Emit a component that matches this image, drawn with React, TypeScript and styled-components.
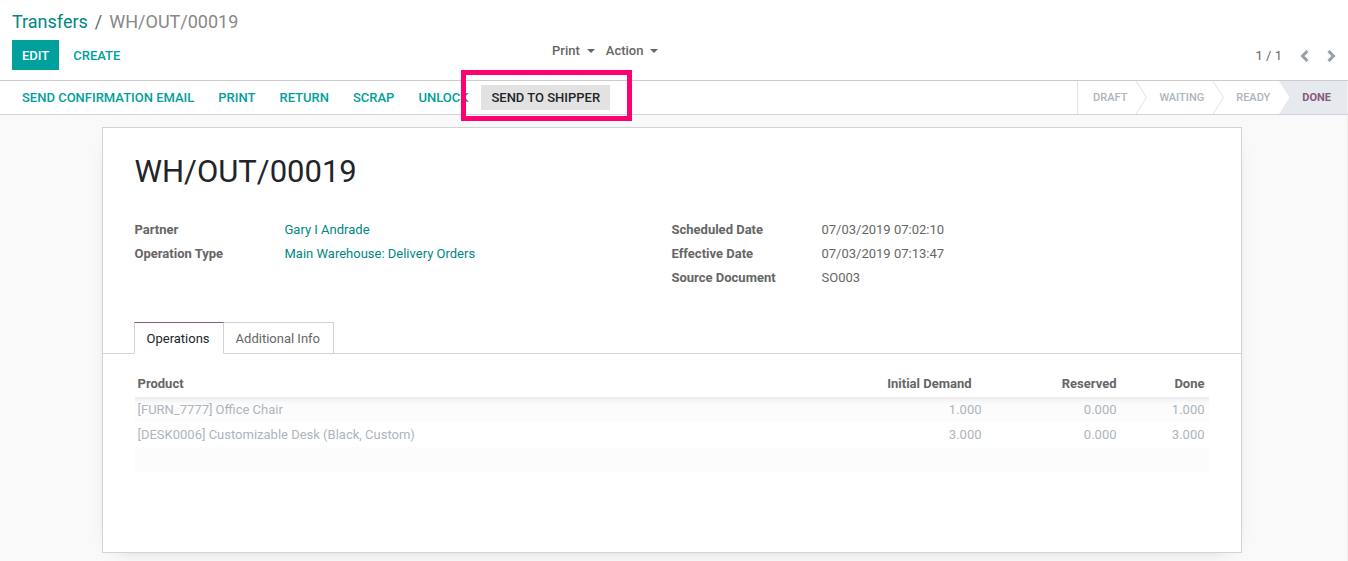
import React from "react";
import styled, { createGlobalStyle, css } from "styled-components";

const GlobalStyle = createGlobalStyle`
  * { box-sizing: border-box; }
  html, body { margin: 0; min-height: 100%; }
  body {
    background: #f9f9f9;
    color: #666666;
    font: 400 13px/20px Roboto, "Noto Sans", sans-serif;
  }
  button { font: inherit; }
`;

const Page = styled.div`
  display: flex;
  flex-direction: column;
  min-height: 100vh;
`;

const ControlPanel = styled.header`
  display: grid;
  grid-template-columns: 540px 1fr auto;
  grid-template-rows: 32px 30px;
  row-gap: 2px;
  padding: 6px 12px 10px;
  background: #ffffff;
  border-bottom: 1px solid #cccccc;
`;

const Breadcrumb = styled.nav`
  grid-column: 1 / -1;
  display: flex;
  align-items: center;
  gap: 7px;
  font-size: 18px;
  line-height: 32px;
`;

const Link = styled.a`
  color: #008784;
  text-decoration: none;
`;

const Current = styled.span`
  color: #888888;
`;

const ButtonRow = styled.div`
  display: flex;
  align-items: center;
  gap: 4px;
`;

const Button = styled.button<{ $variant?: "primary" | "link" | "secondary" }>`
  height: ${(p) => (p.$variant === "secondary" ? "25px" : "30px")};
  padding: 0 10px;
  border: 0;
  font-weight: 500;
  text-transform: uppercase;
  white-space: nowrap;
  cursor: pointer;
  ${(p) =>
    p.$variant === "primary"
      ? css`background: #00a09d; color: #ffffff;`
      : p.$variant === "secondary"
      ? css`background: #e2e2e2; color: #212529;`
      : css`background: transparent; color: #00a09d;`}
`;

const PanelButton = styled(Button)`
  padding-top: 2px;
`;

const Menus = styled.div`
  display: flex;
  align-items: flex-start;
  gap: 11px;
  padding-top: 1px;
`;

const MenuButton = styled.button`
  display: flex;
  align-items: center;
  gap: 7px;
  padding: 0;
  border: 0;
  background: transparent;
  color: #666666;
  font-weight: 500;
  cursor: pointer;

  &::after {
    content: "";
    border: 4px solid transparent;
    border-top-color: currentColor;
    border-bottom: 0;
  }
`;

const Pager = styled.div`
  display: flex;
  align-items: center;
  gap: 18px;
  padding-top: 1px;
`;

const PagerButton = styled.button`
  display: flex;
  padding: 0;
  border: 0;
  background: transparent;
  color: #999fa6;
  cursor: pointer;
`;

const StatusBar = styled.div`
  display: flex;
  justify-content: space-between;
  height: 34px;
  padding-left: 12px;
  background: #ffffff;
  border-bottom: 1px solid #ced4da;
`;

const Highlighted = styled.div`
  position: relative;
  display: flex;
  margin-left: -1px;

  &::after {
    content: "";
    position: absolute;
    inset: -15px -22px -11px -20px;
    border: 5px solid #ff0071;
    pointer-events: none;
  }
`;

const Stages = styled.ol`
  display: flex;
  margin: 0;
  padding: 0;
  list-style: none;
  border-left: 1px solid #dee2e6;
  border-right: 1px solid #f1f1f1;
`;

const Stage = styled.li<{ $active?: boolean; $first?: boolean }>`
  display: flex;
  align-items: center;
  padding-top: 1px;
  padding-left: ${(p) => (p.$first ? "15px" : "12px")};
  padding-right: ${(p) => (p.$active ? "16px" : "9px")};
  background: ${(p) => (p.$active ? "#e6e9ee" : "#ffffff")};
  color: ${(p) => (p.$active ? "#875a7b" : "#adb5bd")};
  font-size: 11px;
  font-weight: ${(p) => (p.$active ? 700 : 500)};
  text-transform: uppercase;
`;

const StageArrow = styled.svg<{ $into?: boolean }>`
  display: block;
  width: 11px;
  height: 33px;
  flex: none;
  background: ${(p) => (p.$into ? "#e6e9ee" : "#ffffff")};
`;

const Main = styled.main`
  flex: 1;
  padding: 12px 4px 8px 0;
  border-right: 1px solid #f1f1f1;
`;

const Sheet = styled.section`
  max-width: 1140px;
  min-height: 426px;
  margin: 0 auto;
  padding: 24px 32px;
  background: #ffffff;
  border: 1px solid #ced4da;
  box-shadow: 0 5px 20px -15px rgba(0, 0, 0, 0.4);
`;

const Title = styled.h1`
  margin: 0 0 26px;
  color: #212529;
  font-size: 31px;
  font-weight: 400;
  line-height: 40px;
`;

const Groups = styled.div`
  display: grid;
  grid-template-columns: 1fr 1fr;
  margin-bottom: 32px;
`;

const Fields = styled.dl`
  display: grid;
  grid-template-columns: 150px 1fr;
  grid-auto-rows: 24px;
  align-items: center;
  margin: 0;

  dt { font-weight: 700; }
  dd { margin: 0; }
`;

const Tabs = styled.div`
  display: flex;
  margin: 0 -32px;
  padding-left: 31px;
  border-bottom: 1px solid #ced4da;
`;

const Tab = styled.button<{ $active?: boolean }>`
  height: 32px;
  margin: 0 0 -1px;
  padding: 2px 12px 0;
  background: #ffffff;
  border: 1px solid #ced4da;
  color: #666666;
  cursor: pointer;

  & + & {
    padding-right: 13px;
    border-left: 0;
  }

  ${(p) =>
    p.$active &&
    css`
      padding-right: 13px;
      border-top-color: #875a7b;
      border-bottom-color: #ffffff;
      color: #212529;
    `}
`;

const Lines = styled.table`
  width: 100%;
  margin-top: 16px;
  border-collapse: collapse;
  table-layout: fixed;

  tbody tr { height: 25px; color: #adb5bd; }
  tbody tr:nth-child(odd) { background: #fcfcfc; }
  tbody tr:first-child {
    background: linear-gradient(#eaeaea, #f4f4f4 3px, #fafafa 6px, #fcfcfc 9px);
  }
`;

const Cell = styled.td<{ $numeric?: boolean }>`
  padding: 0 4px 0 3px;
  text-align: ${(p) => (p.$numeric ? "right" : "left")};
`;

const HeadCell = styled(Cell).attrs({ as: "th", scope: "col" })<{ $sortable?: boolean }>`
  height: 27px;
  padding-top: 1px;
  padding-right: ${(p) => (p.$sortable ? "14px" : "4px")};
  font-weight: 700;
`;

const Col = styled.col<{ $width?: number }>`
  width: ${(p) => (p.$width ? `${p.$width}px` : "auto")};
`;

const lines = [
  { product: "[FURN_7777] Office Chair", demand: "1.000", reserved: "0.000", done: "1.000" },
  { product: "[DESK0006] Customizable Desk (Black, Custom)", demand: "3.000", reserved: "0.000", done: "3.000" },
];

const actions = ["Send Confirmation Email", "Print", "Return", "Scrap", "Unlock"];

function Chevron({ next }: { next?: boolean }) {
  return (
    <svg width="9" height="12" viewBox="0 0 9 12" fill="none" stroke="currentColor" strokeWidth="3" aria-hidden="true">
      <path d={next ? "M1.5 1L6.5 6L1.5 11" : "M7.5 1L2.5 6L7.5 11"} />
    </svg>
  );
}

function Arrow({ into }: { into?: boolean }) {
  return (
    <StageArrow $into={into} viewBox="0 0 11 33" aria-hidden="true">
      <path d="M0 0L10.5 16.5L0 33Z" fill="#ffffff" />
      {!into && <path d="M0 0L10.5 16.5L0 33" fill="none" stroke="#dee2e6" />}
    </StageArrow>
  );
}

export default function App() {
  return (
    <Page>
      <GlobalStyle />
      <ControlPanel>
        <Breadcrumb aria-label="Breadcrumb">
          <Link href="#transfers">Transfers</Link>
          <span>/</span>
          <Current>WH/OUT/00019</Current>
        </Breadcrumb>
        <ButtonRow>
          <PanelButton $variant="primary">Edit</PanelButton>
          <PanelButton>Create</PanelButton>
        </ButtonRow>
        <Menus>
          <MenuButton>Print</MenuButton>
          <MenuButton>Action</MenuButton>
        </Menus>
        <Pager>
          <span>1 / 1</span>
          <PagerButton aria-label="Previous"><Chevron /></PagerButton>
          <PagerButton aria-label="Next"><Chevron next /></PagerButton>
        </Pager>
      </ControlPanel>

      <StatusBar>
        <ButtonRow>
          {actions.map((label) => (
            <Button key={label}>{label}</Button>
          ))}
          <Highlighted>
            <Button $variant="secondary">Send to Shipper</Button>
          </Highlighted>
        </ButtonRow>
        <Stages>
          <Stage $first>Draft</Stage>
          <Arrow />
          <Stage>Waiting</Stage>
          <Arrow />
          <Stage>Ready</Stage>
          <Arrow into />
          <Stage $active aria-current="step">Done</Stage>
        </Stages>
      </StatusBar>

      <Main>
        <Sheet>
          <Title>WH/OUT/00019</Title>
          <Groups>
            <Fields>
              <dt>Partner</dt>
              <dd><Link href="#partner">Gary I Andrade</Link></dd>
              <dt>Operation Type</dt>
              <dd><Link href="#operation-type">Main Warehouse: Delivery Orders</Link></dd>
            </Fields>
            <Fields>
              <dt>Scheduled Date</dt>
              <dd>07/03/2019 07:02:10</dd>
              <dt>Effective Date</dt>
              <dd>07/03/2019 07:13:47</dd>
              <dt>Source Document</dt>
              <dd>SO003</dd>
            </Fields>
          </Groups>
          <Tabs role="tablist">
            <Tab role="tab" aria-selected="true" $active>Operations</Tab>
            <Tab role="tab" aria-selected="false">Additional Info</Tab>
          </Tabs>
          <Lines>
            <colgroup>
              <Col />
              <Col $width={240} />
              <Col $width={135} />
              <Col $width={88} />
            </colgroup>
            <thead>
              <tr>
                <HeadCell>Product</HeadCell>
                <HeadCell $numeric $sortable>Initial Demand</HeadCell>
                <HeadCell $numeric>Reserved</HeadCell>
                <HeadCell $numeric>Done</HeadCell>
              </tr>
            </thead>
            <tbody>
              {lines.map((line) => (
                <tr key={line.product}>
                  <Cell>{line.product}</Cell>
                  <Cell $numeric>{line.demand}</Cell>
                  <Cell $numeric>{line.reserved}</Cell>
                  <Cell $numeric>{line.done}</Cell>
                </tr>
              ))}
              <tr><Cell colSpan={4} /></tr>
            </tbody>
          </Lines>
        </Sheet>
      </Main>
    </Page>
  );
}
